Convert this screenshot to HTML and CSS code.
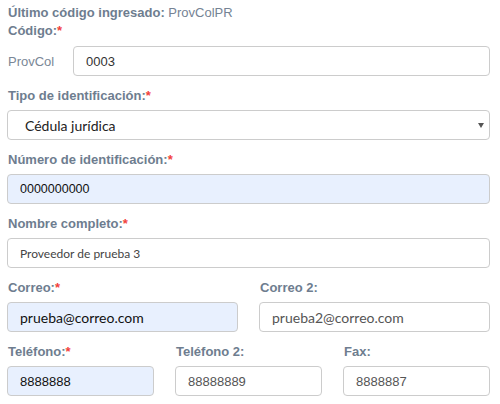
FILE: index.html
```html
<!DOCTYPE html>
<html lang="es">
<head>
<meta charset="utf-8">
<title>Proveedor</title>
<link rel="stylesheet" href="styles.css">
</head>
<body>
<form class="form">
  <div class="last-code"><b>Último código ingresado:</b> ProvColPR</div>
  <div class="group">
    <label class="label label-tight">Código:<span class="req">*</span></label>
    <div class="prefix-row">
      <span class="prefix">ProvCol</span>
      <input class="input f-arial c-dark" type="text" value="0003">
    </div>
  </div>
  <div class="group">
    <label class="label">Tipo de identificación:<span class="req">*</span></label>
    <div class="select">
      <span class="select-text">Cédula jurídica</span>
      <span class="select-arrow"></span>
    </div>
  </div>
  <div class="group">
    <label class="label">Número de identificación:<span class="req">*</span></label>
    <input class="input filled f-arial f-id c-black" type="text" value="0000000000">
  </div>
  <div class="group">
    <label class="label">Nombre completo:<span class="req">*</span></label>
    <input class="input f-lato-sm c-mid" type="text" value="Proveedor de prueba 3">
  </div>
  <div class="group row row-2">
    <div class="col">
      <label class="label">Correo:<span class="req">*</span></label>
      <input class="input filled f-lato c-black" type="text" value="prueba@correo.com">
    </div>
    <div class="col">
      <label class="label">Correo 2:</label>
      <input class="input f-lato c-grey" type="text" value="prueba2@correo.com">
    </div>
  </div>
  <div class="group row row-3">
    <div class="col">
      <label class="label">Teléfono:<span class="req">*</span></label>
      <input class="input filled f-arial c-black" type="text" value="8888888">
    </div>
    <div class="col">
      <label class="label">Teléfono 2:</label>
      <input class="input f-arial c-grey" type="text" value="88888889">
    </div>
    <div class="col">
      <label class="label">Fax:</label>
      <input class="input f-arial c-grey" type="text" value="8888887">
    </div>
  </div>
</form>
</body>
</html>
```
FILE: styles.css
```css
html, body {
  margin: 0;
  padding: 0;
  background: #ffffff;
}
body {
  font-family: "Liberation Sans", Arial, sans-serif;
  font-size: 13px;
  color: #6e7d8f;
}
.form {
  width: 483px;
  padding: 4px 0 0 7px;
}
.last-code {
  line-height: 18px;
  padding-left: 1px;
  color: #758394;
}
.last-code b {
  color: #6e7d8f;
}
.group {
  margin-bottom: 11px;
}
.label {
  display: block;
  font-weight: bold;
  line-height: 18px;
  margin-bottom: 5px;
  padding-left: 1px;
  color: #6e7d8f;
}
.label-tight {
  margin-bottom: 6px;
}
.req {
  color: #f2413b;
}
.prefix-row {
  display: flex;
  align-items: center;
}
.prefix {
  width: 65px;
  padding-left: 1px;
  color: #7a8796;
}
.prefix-row .input {
  flex: 1;
}
.input {
  display: block;
  width: 100%;
  height: 30px;
  box-sizing: border-box;
  border: 1px solid #cccccc;
  border-radius: 4px;
  background: #ffffff;
  padding: 0 12px;
  margin: 0;
  outline: none;
}
.input.filled {
  background: #e8f0fe;
}
.f-arial {
  font-family: "Liberation Sans", Arial, sans-serif;
  font-size: 13px;
}
.f-id {
  font-size: 12.5px;
}
.f-lato {
  font-family: Lato, "Liberation Sans", sans-serif;
  font-size: 14px;
}
.f-lato-sm {
  font-family: Lato, "Liberation Sans", sans-serif;
  font-size: 12px;
}
.c-dark { color: #333333; }
.c-black { color: #111111; }
.c-mid { color: #444444; }
.c-grey { color: #555555; }
.select {
  display: flex;
  align-items: center;
  justify-content: space-between;
  height: 30px;
  box-sizing: border-box;
  border: 1px solid #cccccc;
  border-radius: 4px;
  background: #ffffff;
  padding: 0 4px 0 17px;
}
.select-text {
  font-family: Lato, "Liberation Sans", sans-serif;
  font-size: 14px;
  color: #222222;
}
.select-arrow {
  width: 0;
  height: 0;
  border-left: 3px solid transparent;
  border-right: 3px solid transparent;
  border-top: 5px solid #555555;
  margin-right: 1px;
}
.row {
  display: grid;
  column-gap: 21px;
}
.row-2 {
  grid-template-columns: 1fr 1fr;
}
.row-3 {
  grid-template-columns: 1fr 1fr 1fr;
}
.col {
  min-width: 0;
}
```
